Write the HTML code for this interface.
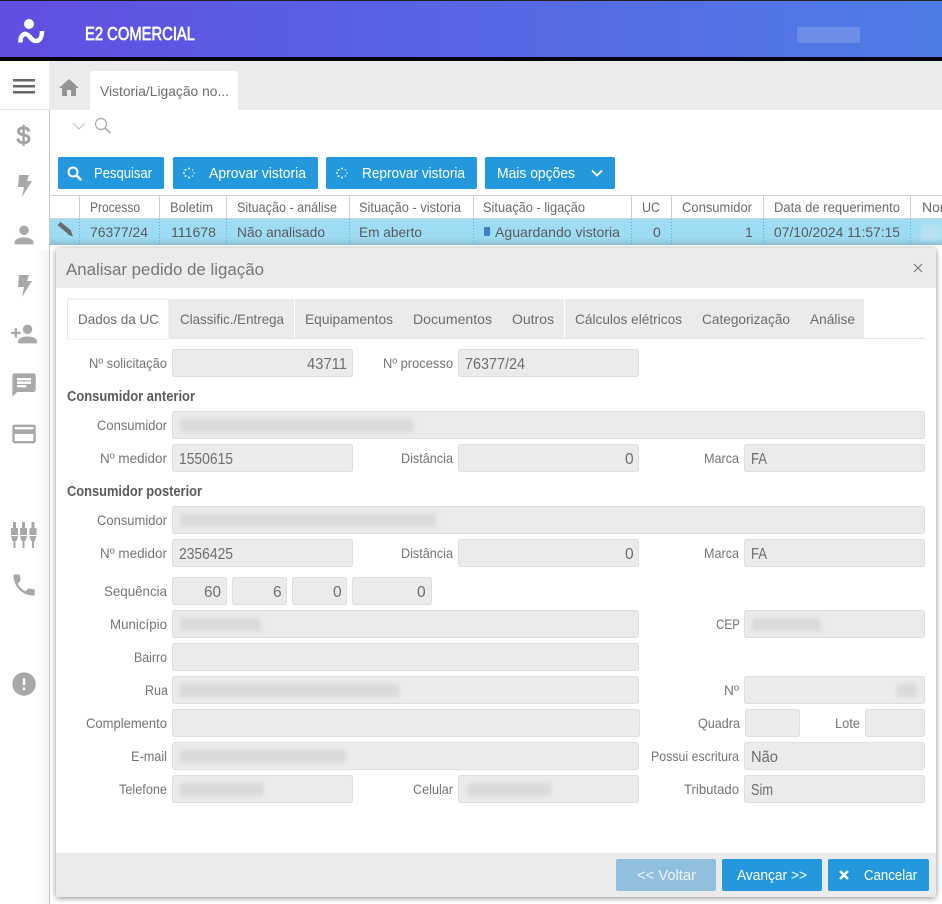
<!DOCTYPE html>
<html lang="pt"><head><meta charset="utf-8"><title>E2 Comercial</title>
<style>
html,body{margin:0;padding:0;background:#fff;width:942px;height:904px;overflow:hidden}
svg{display:block;font-family:"Liberation Sans",sans-serif}
.l{font-size:14px;fill:#747474}
.v{font-size:15.500px;fill:#6e6e6e}
.h{font-size:14px;fill:#6a6a6a}
.r{font-size:14px;fill:#5a5a5a}
.b{font-size:14.500px;fill:#fff}
.t{font-size:14px;fill:#6c6c6c}
.s{font-size:14.500px;fill:#5a5a5a;font-weight:bold}
.f{fill:#ebebeb;stroke:#dedede}
.i{fill:#a8a8a8}
</style></head><body>
<svg width="942" height="904" viewBox="0 0 942 904" xmlns="http://www.w3.org/2000/svg">
<defs>
<linearGradient id="hd" x1="0" x2="1" y1="0" y2="0"><stop offset="0" stop-color="#5f4fe2"/><stop offset="1" stop-color="#4f7de6"/></linearGradient>
<linearGradient id="sh" x1="0" x2="1" y1="0" y2="0"><stop offset="0" stop-color="#000" stop-opacity="0"/><stop offset="1" stop-color="#000" stop-opacity=".05"/></linearGradient>
<linearGradient id="rw" x1="0" x2="0" y1="0" y2="1"><stop offset="0" stop-color="#9edcf4"/><stop offset=".7" stop-color="#9edcf4"/><stop offset="1" stop-color="#8fbfd4"/></linearGradient>
<filter id="bl" x="-10%" y="-50%" width="120%" height="200%"><feGaussianBlur stdDeviation="2.500"/></filter>
<filter id="ms" x="-5%" y="-5%" width="110%" height="110%"><feDropShadow dx="0" dy="1" stdDeviation="3" flood-color="#000" flood-opacity=".45"/></filter>
<clipPath id="cl"><rect x="911" y="196" width="31" height="50"/></clipPath>
</defs>

<!-- header -->
<rect width="942" height="57" fill="url(#hd)"/>
<rect width="942" height="1" fill="#222"/>
<rect y="57" width="942" height="4" fill="#000"/>
<circle cx="29" cy="24" r="5" fill="#fff"/>
<path d="M20.500 42.500 C20 36.500 23 33.500 26 34 C30 35 31 41 36 41 C40 41 42 37 42 31" fill="none" stroke="#fff" stroke-width="4.500"/>
<text x="85" y="40" font-size="18.500" fill="#fff" stroke="#fff" stroke-width=".7" textLength="110" lengthAdjust="spacingAndGlyphs">E2 COMERCIAL</text>
<rect x="797" y="27" width="63" height="16" fill="#6c8ce8"/>

<!-- tab strip -->
<rect x="49" y="61" width="893" height="49" fill="#ebebeb"/>
<rect x="0" y="109" width="49" height="1" fill="#e2e2e2"/>
<rect x="90" y="71" width="148" height="39" rx="2" fill="#fff"/>
<path transform="translate(57 76)" d="M10 20v-6h4v6h5v-8h3L12 3 2 12h3v8z" fill="#949494"/>
<text x="100" y="96" class="t" textLength="129" lengthAdjust="spacingAndGlyphs">Vistoria/Ligação no...</text>
<rect x="13" y="79" width="22" height="2.500" fill="#666"/><rect x="13" y="85" width="22" height="2.500" fill="#666"/><rect x="13" y="91" width="22" height="2.500" fill="#666"/>

<!-- sidebar -->
<rect x="36" y="250" width="13" height="654" fill="url(#sh)"/>
<rect x="49" y="110" width="1" height="794" fill="#c4c4c4"/>
<text x="23.500" y="144" font-size="25" text-anchor="middle" fill="#a0a0a0" stroke="#a0a0a0" stroke-width=".8">$</text>
<path class="i" d="M19 175h10l-2 6h5l-10 16 2-10h-6z"/>
<path class="i" transform="translate(10 221) scale(1.170)" d="M12 12c2.210 0 4-1.790 4-4s-1.790-4-4-4-4 1.790-4 4 1.790 4 4 4zm0 2c-2.670 0-8 1.340-8 4v2h16v-2c0-2.660-5.330-4-8-4z"/>
<path class="i" d="M19 275h10l-2 6h5l-10 16 2-10h-6z"/>
<path class="i" transform="translate(10 320) scale(1.170)" d="M15 12c2.210 0 4-1.790 4-4s-1.790-4-4-4-4 1.790-4 4 1.790 4 4 4zm-9-2V7H4v3H1v2h3v3h2v-3h3v-2H6zm9 4c-2.670 0-8 1.340-8 4v2h16v-2c0-2.660-5.330-4-8-4z"/>
<path class="i" transform="translate(10 371) scale(1.170)" d="M20 2H4c-1.100 0-1.990.9-1.990 2L2 22l4-4h14c1.100 0 2-.9 2-2V4c0-1.100-.9-2-2-2zM6 9h12v2H6V9zm8 5H6v-2h8v2zm4-6H6V6h12v2z"/>
<path class="i" transform="translate(10 420) scale(1.170)" d="M20 4H4c-1.110 0-1.990.89-1.990 2L2 18c0 1.110.89 2 2 2h16c1.110 0 2-.89 2-2V6c0-1.110-.89-2-2-2zm0 14H4v-6h16v6zm0-10H4V6h16v2z"/>
<g class="i">
<path d="M13 522h3v6h2v7h-7v-7h2zM11 536h7l-1.500 5h-1v7h-2v-7h-1z"/>
<path d="M22 522h3v6h2v7h-7v-7h2zM20 536h7l-1.500 5h-1v7h-2v-7h-1z"/>
<path d="M31.500 522h3v6h2v7h-7v-7h2zM29.500 536h7l-1.500 5h-1v7h-2v-7h-1z"/>
</g>
<path class="i" transform="translate(10 571) scale(1.170)" d="M6.620 10.790c1.440 2.830 3.760 5.140 6.590 6.590l2.200-2.200c.27-.27.67-.36 1.020-.24 1.120.37 2.330.57 3.570.57.55 0 1 .45 1 1V20c0 .55-.45 1-1 1-9.390 0-17-7.610-17-17 0-.55.45-1 1-1h3.500c.55 0 1 .45 1 1 0 1.250.2 2.450.57 3.570.11.35.03.74-.25 1.020l-2.200 2.200z"/>
<path class="i" transform="translate(10 670) scale(1.170)" d="M12 2C6.480 2 2 6.480 2 12s4.480 10 10 10 10-4.480 10-10S17.520 2 12 2zm1 15h-2v-2h2v2zm0-4h-2V7h2v6z"/>

<!-- filter row -->
<path d="M73 123l6 6 6-6" fill="none" stroke="#c4c4c4" stroke-width="1.200"/>
<circle cx="101" cy="124" r="5.500" fill="none" stroke="#a8a8a8" stroke-width="1.200"/>
<path d="M105 128l5.500 5" stroke="#a8a8a8" stroke-width="1.600"/>

<!-- toolbar -->
<rect x="58" y="157" width="106" height="32" rx="2" fill="#2398dd"/>
<rect x="173" y="157" width="145" height="32" rx="2" fill="#2398dd"/>
<rect x="326" y="157" width="151" height="32" rx="2" fill="#2398dd"/>
<rect x="485" y="157" width="130" height="32" rx="2" fill="#2398dd"/>
<circle cx="73" cy="172" r="4.500" fill="none" stroke="#fff" stroke-width="2"/>
<path d="M76.500 175.500l4 4" stroke="#fff" stroke-width="2.500" stroke-linecap="round"/>
<g fill="#e6f4fc">
<circle cx="189" cy="168.500" r="1"/><circle cx="192.500" cy="170" r=".7"/><circle cx="194" cy="173" r=".7"/><circle cx="192.500" cy="176" r=".8"/><circle cx="189" cy="177.500" r="1"/><circle cx="185.500" cy="176" r="1"/><circle cx="184" cy="173" r="1"/><circle cx="185.500" cy="170" r="1"/>
<circle cx="342" cy="168.500" r="1"/><circle cx="345.500" cy="170" r=".7"/><circle cx="347" cy="173" r=".7"/><circle cx="345.500" cy="176" r=".8"/><circle cx="342" cy="177.500" r="1"/><circle cx="338.500" cy="176" r="1"/><circle cx="337" cy="173" r="1"/><circle cx="338.500" cy="170" r="1"/>
</g>
<path d="M592 170.500l5 5 5-5" fill="none" stroke="#fff" stroke-width="1.800"/>
<text x="94" y="178" class="b" textLength="58" lengthAdjust="spacingAndGlyphs">Pesquisar</text>
<text x="209" y="178" class="b" textLength="97" lengthAdjust="spacingAndGlyphs">Aprovar vistoria</text>
<text x="362" y="178" class="b" textLength="103" lengthAdjust="spacingAndGlyphs">Reprovar vistoria</text>
<text x="497" y="178" class="b" textLength="78" lengthAdjust="spacingAndGlyphs">Mais opções</text>

<!-- table -->
<rect x="50" y="195" width="892" height="1" fill="#cfcfcf"/>
<rect x="50" y="218" width="892" height="1" fill="#cfcfcf"/>
<rect x="50" y="219" width="892" height="26" fill="url(#rw)"/>
<g fill="#cfcfcf">
<rect x="79" y="196" width="1" height="22"/><rect x="159" y="196" width="1" height="22"/><rect x="226" y="196" width="1" height="22"/><rect x="349" y="196" width="1" height="22"/><rect x="473" y="196" width="1" height="22"/><rect x="631" y="196" width="1" height="22"/><rect x="671" y="196" width="1" height="22"/><rect x="763" y="196" width="1" height="22"/><rect x="910" y="196" width="1" height="22"/>
</g>
<path d="M79.500 219V245M159.500 219V245M226.500 219V245M349.500 219V245M473.500 219V245M631.500 219V245M671.500 219V245M763.500 219V245M910.500 219V245" stroke="#38bde0" stroke-width="1" stroke-dasharray="1 2" fill="none"/>
<path d="M59 223.500l11 9" stroke="#6a6a6a" stroke-width="4.500"/>
<path d="M67.500 234.500l5.500 2-2-5.500z" fill="#6a6a6a"/>
<text x="90" y="212" class="h" textLength="50" lengthAdjust="spacingAndGlyphs">Processo</text>
<text x="170" y="212" class="h" textLength="43" lengthAdjust="spacingAndGlyphs">Boletim</text>
<text x="237" y="212" class="h" textLength="100" lengthAdjust="spacingAndGlyphs">Situação - análise</text>
<text x="359" y="212" class="h" textLength="102" lengthAdjust="spacingAndGlyphs">Situação - vistoria</text>
<text x="483" y="212" class="h" textLength="102" lengthAdjust="spacingAndGlyphs">Situação - ligação</text>
<text x="642" y="212" class="h" textLength="18" lengthAdjust="spacingAndGlyphs">UC</text>
<text x="682" y="212" class="h" textLength="70" lengthAdjust="spacingAndGlyphs">Consumidor</text>
<text x="774" y="212" class="h" textLength="126" lengthAdjust="spacingAndGlyphs">Data de requerimento</text>
<g clip-path="url(#cl)"><text x="922" y="212" class="h">Nome</text><rect x="921" y="224" width="21" height="16" fill="#b8e2f2" filter="url(#bl)"/></g>
<text x="90" y="237" class="r" textLength="58" lengthAdjust="spacingAndGlyphs">76377/24</text>
<text x="171" y="237" class="r" textLength="45" lengthAdjust="spacingAndGlyphs">111678</text>
<text x="237" y="237" class="r" textLength="88" lengthAdjust="spacingAndGlyphs">Não analisado</text>
<text x="359" y="237" class="r" textLength="63" lengthAdjust="spacingAndGlyphs">Em aberto</text>
<rect x="484" y="227" width="6" height="9" rx="1" fill="#3f7fc4"/>
<text x="495" y="237" class="r" textLength="125" lengthAdjust="spacingAndGlyphs">Aguardando vistoria</text>
<text x="653" y="237" class="r">0</text>
<text x="745" y="237" class="r">1</text>
<text x="774" y="237" class="r" textLength="126" lengthAdjust="spacingAndGlyphs">07/10/2024 11:57:15</text>

<!-- modal -->
<rect x="56" y="248" width="880" height="649" rx="3" fill="#fff" filter="url(#ms)"/>
<path d="M56 288V251a3 3 0 0 1 3-3H933a3 3 0 0 1 3 3V288z" fill="#ebebeb"/>
<text x="66" y="275" font-size="17" fill="#777" textLength="198" lengthAdjust="spacingAndGlyphs">Analisar pedido de ligação</text>
<path d="M914 264l8 8M922 264l-8 8" stroke="#777" stroke-width="1.100"/>

<!-- tabs -->
<rect x="169" y="299" width="695" height="39" fill="#ebebeb"/>
<rect x="294" y="299" width="1" height="39" fill="#fff"/>
<rect x="564" y="299" width="1" height="39" fill="#fff"/>
<rect x="67" y="338" width="858" height="1" fill="#e4e4e4"/>
<path d="M67.500 339V301a2 2 0 0 1 2-2H167a2 2 0 0 1 2 2V339z" fill="#fff" stroke="#e4e4e4"/>
<rect x="68" y="337" width="101" height="2" fill="#fff"/>
<text x="78" y="324" class="t" textLength="81" lengthAdjust="spacingAndGlyphs">Dados da UC</text>
<text x="180" y="324" class="t" textLength="104" lengthAdjust="spacingAndGlyphs">Classific./Entrega</text>
<text x="305" y="324" class="t" textLength="88" lengthAdjust="spacingAndGlyphs">Equipamentos</text>
<text x="413" y="324" class="t" textLength="79" lengthAdjust="spacingAndGlyphs">Documentos</text>
<text x="512" y="324" class="t" textLength="42" lengthAdjust="spacingAndGlyphs">Outros</text>
<text x="575" y="324" class="t" textLength="107" lengthAdjust="spacingAndGlyphs">Cálculos elétricos</text>
<text x="702" y="324" class="t" textLength="88" lengthAdjust="spacingAndGlyphs">Categorização</text>
<text x="810" y="324" class="t" textLength="45" lengthAdjust="spacingAndGlyphs">Análise</text>

<!-- fields -->
<g class="f">
<rect x="172.500" y="349.500" width="180" height="27" rx="2"/><rect x="458.500" y="349.500" width="180" height="27" rx="2"/>
<rect x="172.500" y="411.500" width="752" height="27" rx="2"/>
<rect x="172.500" y="444.500" width="180" height="27" rx="2"/><rect x="458.500" y="444.500" width="180" height="27" rx="2"/><rect x="744.500" y="444.500" width="180" height="27" rx="2"/>
<rect x="172.500" y="506.500" width="752" height="27" rx="2"/>
<rect x="172.500" y="539.500" width="180" height="27" rx="2"/><rect x="458.500" y="539.500" width="180" height="27" rx="2"/><rect x="744.500" y="539.500" width="180" height="27" rx="2"/>
<rect x="172.500" y="577.500" width="54" height="27" rx="2"/><rect x="232.500" y="577.500" width="54" height="27" rx="2"/><rect x="292.500" y="577.500" width="54" height="27" rx="2"/><rect x="352.500" y="577.500" width="79" height="27" rx="2"/>
<rect x="172.500" y="610.500" width="466" height="27" rx="2"/><rect x="744.500" y="610.500" width="180" height="27" rx="2"/>
<rect x="172.500" y="643.500" width="466" height="27" rx="2"/>
<rect x="172.500" y="676.500" width="466" height="27" rx="2"/><rect x="744.500" y="676.500" width="180" height="27" rx="2"/>
<rect x="172.500" y="709.500" width="467" height="27" rx="2"/><rect x="745.500" y="709.500" width="54" height="27" rx="2"/><rect x="865.500" y="709.500" width="59" height="27" rx="2"/>
<rect x="172.500" y="742.500" width="466" height="27" rx="2"/><rect x="744.500" y="742.500" width="180" height="27" rx="2"/>
<rect x="172.500" y="775.500" width="180" height="27" rx="2"/><rect x="458.500" y="775.500" width="180" height="27" rx="2"/><rect x="744.500" y="775.500" width="180" height="27" rx="2"/>
</g>

<!-- redacted values -->
<g fill="#dadada" filter="url(#bl)">
<rect x="180" y="419" width="234" height="13"/>
<rect x="180" y="514" width="256" height="13"/>
<rect x="180" y="618" width="81" height="13"/>
<rect x="752" y="618" width="69" height="13"/>
<rect x="180" y="684" width="219" height="13"/>
<rect x="897" y="684" width="20" height="13"/>
<rect x="180" y="750" width="166" height="13"/>
<rect x="180" y="783" width="84" height="13"/>
<rect x="467" y="783" width="84" height="13"/>
</g>

<text x="89" y="368" class="l" textLength="78" lengthAdjust="spacingAndGlyphs">Nº solicitação</text>
<text x="383" y="368" class="l" textLength="70" lengthAdjust="spacingAndGlyphs">Nº processo</text>
<text x="67" y="401" class="s" textLength="128" lengthAdjust="spacingAndGlyphs">Consumidor anterior</text>
<text x="97" y="430" class="l" textLength="70" lengthAdjust="spacingAndGlyphs">Consumidor</text>
<text x="100" y="463" class="l" textLength="67" lengthAdjust="spacingAndGlyphs">Nº medidor</text>
<text x="401" y="463" class="l" textLength="52" lengthAdjust="spacingAndGlyphs">Distância</text>
<text x="704" y="463" class="l" textLength="35" lengthAdjust="spacingAndGlyphs">Marca</text>
<text x="67" y="496" class="s" textLength="135" lengthAdjust="spacingAndGlyphs">Consumidor posterior</text>
<text x="97" y="525" class="l" textLength="70" lengthAdjust="spacingAndGlyphs">Consumidor</text>
<text x="100" y="558" class="l" textLength="67" lengthAdjust="spacingAndGlyphs">Nº medidor</text>
<text x="401" y="558" class="l" textLength="52" lengthAdjust="spacingAndGlyphs">Distância</text>
<text x="704" y="558" class="l" textLength="35" lengthAdjust="spacingAndGlyphs">Marca</text>
<text x="104" y="596" class="l" textLength="63" lengthAdjust="spacingAndGlyphs">Sequência</text>
<text x="110" y="629" class="l" textLength="57" lengthAdjust="spacingAndGlyphs">Município</text>
<text x="716" y="629" class="l" textLength="24" lengthAdjust="spacingAndGlyphs">CEP</text>
<text x="134" y="662" class="l" textLength="33" lengthAdjust="spacingAndGlyphs">Bairro</text>
<text x="145" y="695" class="l" textLength="23" lengthAdjust="spacingAndGlyphs">Rua</text>
<text x="724" y="695" class="l" textLength="15" lengthAdjust="spacingAndGlyphs">Nº</text>
<text x="86" y="728" class="l" textLength="81" lengthAdjust="spacingAndGlyphs">Complemento</text>
<text x="698" y="728" class="l" textLength="42" lengthAdjust="spacingAndGlyphs">Quadra</text>
<text x="835" y="728" class="l" textLength="25" lengthAdjust="spacingAndGlyphs">Lote</text>
<text x="131" y="761" class="l" textLength="36" lengthAdjust="spacingAndGlyphs">E-mail</text>
<text x="651" y="761" class="l" textLength="88" lengthAdjust="spacingAndGlyphs">Possui escritura</text>
<text x="119" y="794" class="l" textLength="48" lengthAdjust="spacingAndGlyphs">Telefone</text>
<text x="413" y="794" class="l" textLength="40" lengthAdjust="spacingAndGlyphs">Celular</text>
<text x="684" y="794" class="l" textLength="55" lengthAdjust="spacingAndGlyphs">Tributado</text>

<text x="307" y="369" class="v" textLength="40" lengthAdjust="spacingAndGlyphs">43711</text>
<text x="465" y="369" class="v" textLength="60" lengthAdjust="spacingAndGlyphs">76377/24</text>
<text x="179" y="464" class="v" textLength="54" lengthAdjust="spacingAndGlyphs">1550615</text>
<text x="625" y="464" class="v">0</text>
<text x="751" y="464" class="v" textLength="16" lengthAdjust="spacingAndGlyphs">FA</text>
<text x="179" y="559" class="v" textLength="54" lengthAdjust="spacingAndGlyphs">2356425</text>
<text x="625" y="559" class="v">0</text>
<text x="751" y="559" class="v" textLength="16" lengthAdjust="spacingAndGlyphs">FA</text>
<text x="204" y="597" class="v" textLength="17" lengthAdjust="spacingAndGlyphs">60</text>
<text x="273" y="597" class="v">6</text>
<text x="333" y="597" class="v">0</text>
<text x="417" y="597" class="v">0</text>
<text x="751" y="762" class="v" textLength="27" lengthAdjust="spacingAndGlyphs">Não</text>
<text x="751" y="795" class="v" textLength="22" lengthAdjust="spacingAndGlyphs">Sim</text>

<!-- footer -->
<path d="M56 853H936V894a3 3 0 0 1-3 3H59a3 3 0 0 1-3-3z" fill="#ebebeb"/>
<rect x="616" y="859" width="100" height="32" rx="2" fill="#91bfe0"/>
<rect x="722" y="859" width="100" height="32" rx="2" fill="#2398dd"/>
<rect x="828" y="859" width="101" height="32" rx="2" fill="#2398dd"/>
<text x="637" y="880" class="b" fill-opacity=".85" textLength="59" lengthAdjust="spacingAndGlyphs">&lt;&lt; Voltar</text>
<text x="737" y="880" class="b" textLength="70" lengthAdjust="spacingAndGlyphs">Avançar &gt;&gt;</text>
<path d="M840 871l8 8M848 871l-8 8" stroke="#fff" stroke-width="2.400"/>
<text x="864" y="880" class="b" textLength="53" lengthAdjust="spacingAndGlyphs">Cancelar</text>
</svg>
</body></html>
